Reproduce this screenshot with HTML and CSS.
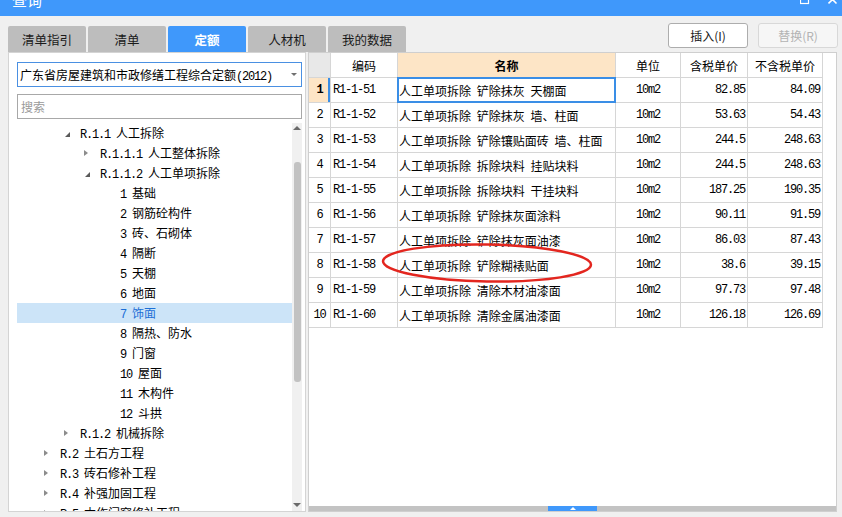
FILE: index.html
```html
<!DOCTYPE html>
<html lang="zh-CN">
<head>
<meta charset="utf-8">
<title>查询</title>
<link rel="stylesheet" href="styles.css">
</head>
<body>
<div class="titlebar">
  <div class="title">查询</div>
  <div class="winctl">
    <svg width="10" height="10" viewBox="0 0 10 10"><rect x="0.5" y="0.5" width="8" height="8" fill="none" stroke="#fff" stroke-width="1.2"/></svg>
    <svg width="10" height="10" viewBox="0 0 10 10"><path d="M0.5 0.5 L8.5 8.5 M8.5 0.5 L0.5 8.5" stroke="#fff" stroke-width="1.6" fill="none"/></svg>
  </div>
</div>

<div class="toolbar">
  <div class="tabs">
    <div class="tab">清单指引</div>
    <div class="tab">清单</div>
    <div class="tab active">定额</div>
    <div class="tab">人材机</div>
    <div class="tab">我的数据</div>
  </div>
  <div class="actions">
    <div class="btn">插入(I)</div>
    <div class="btn disabled">替换(R)</div>
  </div>
</div>

<div class="main">
  <div class="left">
    <div class="select"><span class="sel-text">广东省房屋建筑和市政修缮工程综合定额<span class="n">(2012)</span></span><span class="caret"></span></div>
    <div class="search">搜索</div>
    <div class="treewrap">
      <div class="tree">
        <div class="node l1"><span class="tw open"></span><span class="n">R.1.1 </span>人工拆除</div>
        <div class="node l2"><span class="tw closed"></span><span class="n">R.1.1.1 </span>人工整体拆除</div>
        <div class="node l2"><span class="tw open"></span><span class="n">R.1.1.2 </span>人工单项拆除</div>
        <div class="node l3"><span class="tw"></span><span class="n">1 </span>基础</div>
        <div class="node l3"><span class="tw"></span><span class="n">2 </span>钢筋砼构件</div>
        <div class="node l3"><span class="tw"></span><span class="n">3 </span>砖、石砌体</div>
        <div class="node l3"><span class="tw"></span><span class="n">4 </span>隔断</div>
        <div class="node l3"><span class="tw"></span><span class="n">5 </span>天棚</div>
        <div class="node l3"><span class="tw"></span><span class="n">6 </span>地面</div>
        <div class="node l3 sel"><span class="tw"></span><span class="n">7 </span>饰面</div>
        <div class="node l3"><span class="tw"></span><span class="n">8 </span>隔热、防水</div>
        <div class="node l3"><span class="tw"></span><span class="n">9 </span>门窗</div>
        <div class="node l3"><span class="tw"></span><span class="n">10 </span>屋面</div>
        <div class="node l3"><span class="tw"></span><span class="n">11 </span>木构件</div>
        <div class="node l3"><span class="tw"></span><span class="n">12 </span>斗拱</div>
        <div class="node l1"><span class="tw closed"></span><span class="n">R.1.2 </span>机械拆除</div>
        <div class="node l0"><span class="tw closed"></span><span class="n">R.2 </span>土石方工程</div>
        <div class="node l0"><span class="tw closed"></span><span class="n">R.3 </span>砖石修补工程</div>
        <div class="node l0"><span class="tw closed"></span><span class="n">R.4 </span>补强加固工程</div>
        <div class="node l0"><span class="tw closed"></span><span class="n">R.5 </span>木作门窗修补工程</div>
      </div>
      <div class="vscroll">
        <div class="sb-up"></div>
        <div class="sb-thumb"></div>
        <div class="sb-down"></div>
      </div>
    </div>
  </div>

  <div class="right">
    <div class="grid">
      <div class="corner"></div>
      <div class="hd">编码</div>
      <div class="hd hname">名称</div>
      <div class="hd">单位</div>
      <div class="hd">含税单价</div>
      <div class="hd">不含税单价</div>

      <div class="rn cur"><span class="n">1</span></div>
      <div class="code n">R1-1-51</div>
      <div class="name cur">人工单项拆除 铲除抹灰 天棚面</div>
      <div class="unit n">10m2</div>
      <div class="price n">82.85</div>
      <div class="price n">84.09</div>

      <div class="rn"><span class="n">2</span></div>
      <div class="code n">R1-1-52</div>
      <div class="name">人工单项拆除 铲除抹灰 墙、柱面</div>
      <div class="unit n">10m2</div>
      <div class="price n">53.63</div>
      <div class="price n">54.43</div>

      <div class="rn"><span class="n">3</span></div>
      <div class="code n">R1-1-53</div>
      <div class="name">人工单项拆除 铲除镶贴面砖 墙、柱面</div>
      <div class="unit n">10m2</div>
      <div class="price n">244.5</div>
      <div class="price n">248.63</div>

      <div class="rn"><span class="n">4</span></div>
      <div class="code n">R1-1-54</div>
      <div class="name">人工单项拆除 拆除块料 挂贴块料</div>
      <div class="unit n">10m2</div>
      <div class="price n">244.5</div>
      <div class="price n">248.63</div>

      <div class="rn"><span class="n">5</span></div>
      <div class="code n">R1-1-55</div>
      <div class="name">人工单项拆除 拆除块料 干挂块料</div>
      <div class="unit n">10m2</div>
      <div class="price n">187.25</div>
      <div class="price n">190.35</div>

      <div class="rn"><span class="n">6</span></div>
      <div class="code n">R1-1-56</div>
      <div class="name">人工单项拆除 铲除抹灰面涂料</div>
      <div class="unit n">10m2</div>
      <div class="price n">90.11</div>
      <div class="price n">91.59</div>

      <div class="rn"><span class="n">7</span></div>
      <div class="code n">R1-1-57</div>
      <div class="name">人工单项拆除 铲除抹灰面油漆</div>
      <div class="unit n">10m2</div>
      <div class="price n">86.03</div>
      <div class="price n">87.43</div>

      <div class="rn"><span class="n">8</span></div>
      <div class="code n">R1-1-58</div>
      <div class="name">人工单项拆除 铲除糊裱贴面</div>
      <div class="unit n">10m2</div>
      <div class="price n">38.6</div>
      <div class="price n">39.15</div>

      <div class="rn"><span class="n">9</span></div>
      <div class="code n">R1-1-59</div>
      <div class="name">人工单项拆除 清除木材油漆面</div>
      <div class="unit n">10m2</div>
      <div class="price n">97.73</div>
      <div class="price n">97.48</div>

      <div class="rn"><span class="n">10</span></div>
      <div class="code n">R1-1-60</div>
      <div class="name">人工单项拆除 清除金属油漆面</div>
      <div class="unit n">10m2</div>
      <div class="price n">126.18</div>
      <div class="price n">126.69</div>
    </div>

    <svg class="ellipse" width="216" height="44" viewBox="0 0 216 44">
      <ellipse cx="108" cy="22" rx="104" ry="18.5" transform="rotate(1 108 22)" fill="none" stroke="#e3261f" stroke-width="2.5"/>
    </svg>

    <div class="splitter"><div class="grip"><span class="grip-arrow"></span></div></div>
  </div>
</div>
</body>
</html>
```

FILE: styles.css
```css
* { box-sizing: border-box; }
html, body { margin: 0; padding: 0; }
body {
  width: 842px;
  height: 517px;
  overflow: hidden;
  background: #f0f0f0;
  font-family: "Noto Sans CJK SC", "Microsoft YaHei", sans-serif;
  font-size: 12px;
  color: #000;
}
.n {
  font-family: "Liberation Mono", "Noto Sans CJK SC", monospace;
  letter-spacing: -1.2px;
}

/* title bar */
.titlebar {
  height: 16px;
  background: #3f98fb;
  display: flex;
  justify-content: space-between;
  overflow: hidden;
  padding: 0 4px 0 12px;
}
.title {
  color: #fff;
  font-size: 15px;
  line-height: 15px;
  margin-top: -8px;
}
.winctl {
  display: flex;
  gap: 18px;
  align-items: flex-start;
}
.winctl svg { display: block; margin-top: -5px; }

/* toolbar */
.toolbar {
  height: 36px;
  display: flex;
  padding: 0 4px 0 8px;
}
.tabs {
  display: flex;
  gap: 2px;
  align-self: flex-end;
}
.tab {
  width: 78px;
  height: 26px;
  background: #bdbdbd;
  border-radius: 2px 2px 0 0;
  display: flex;
  align-items: center;
  justify-content: center;
  color: #1a1a1a;
  font-size: 12.5px;
}
.tab.active {
  background: #3f98fb;
  color: #fff;
  font-weight: bold;
}
.actions {
  margin-left: auto;
  display: flex;
  gap: 10px;
  padding-top: 7px;
}
.btn {
  width: 80px;
  height: 25px;
  border: 1px solid #adadad;
  border-radius: 3px;
  background: #fff;
  display: flex;
  align-items: center;
  justify-content: center;
  color: #1a1a1a;
}
.btn.disabled {
  border-color: #d8d8d8;
  background: #f6f6f6;
  color: #b3b3b3;
}

/* main */
.main {
  display: flex;
  gap: 2px;
  padding-left: 8px;
  height: 460px;
}
.left {
  width: 298px;
  border: 1px solid #d4d4d4;
  background: #fff;
  padding: 9px 3px 0 8px;
  display: flex;
  flex-direction: column;
}
.select {
  height: 25px;
  border: 1px solid #4a90e2;
  display: flex;
  align-items: center;
  padding-left: 2px;
  white-space: nowrap;
}
.select .caret {
  margin-left: auto;
  margin-right: 4px;
  width: 0;
  height: 0;
  border-left: 3px solid transparent;
  border-right: 3px solid transparent;
  border-top: 3px solid #707070;
}
.search {
  height: 25px;
  margin-top: 7px;
  border: 1px solid #a8a8a8;
  display: flex;
  align-items: center;
  padding-left: 3px;
  color: #9a9a9a;
}
.treewrap {
  margin-top: 4px;
  flex: 1;
  min-height: 0;
  display: flex;
  overflow: hidden;
}
.tree { flex: 1; overflow: hidden; }
.node {
  height: 20px;
  line-height: 20px;
  white-space: pre;
}
.l0 { padding-left: 27px; }
.l1 { padding-left: 47px; }
.l2 { padding-left: 67px; }
.l3 { padding-left: 87px; }
.node.sel { background: #cce4f8; color: #1c6fd6; }
.tw {
  display: inline-flex;
  vertical-align: top;
  width: 16px;
  height: 20px;
  align-items: center;
}
.tw.closed::before {
  content: "";
  border-left: 4px solid #8c8c8c;
  border-top: 3.5px solid transparent;
  border-bottom: 3.5px solid transparent;
}
.tw.open::before {
  content: "";
  margin: 3px 0 0 1px;
  border-style: solid;
  border-width: 0 0 5px 5px;
  border-color: transparent transparent #5a5a5a transparent;
}
.vscroll {
  width: 10px;
  background: #f0f0f0;
  display: flex;
  flex-direction: column;
  align-items: center;
}
.sb-up {
  margin-top: 3px;
  border-left: 4px solid transparent;
  border-right: 4px solid transparent;
  border-bottom: 4px solid #6a6a6a;
}
.sb-thumb {
  margin-top: 32px;
  width: 7px;
  height: 220px;
  background: #c2c2c2;
  border-radius: 3px;
}
.sb-down {
  margin-top: auto;
  margin-bottom: 4px;
  border-left: 4px solid transparent;
  border-right: 4px solid transparent;
  border-top: 4px solid #6a6a6a;
}

/* right panel */
.right {
  width: 529px;
  border: 1px solid #cfcfcf;
  background: #fff;
  display: flex;
  flex-direction: column;
  position: relative;
}
.grid {
  display: grid;
  grid-template-columns: 22px 67px 218px 65px 67px 75px;
  grid-auto-rows: 25px;
  width: 514px;
}
.grid > div {
  border-right: 1px solid #d6d6d6;
  border-bottom: 1px solid #d6d6d6;
  display: flex;
  align-items: center;
  white-space: nowrap;
  overflow: hidden;
}
.grid > .hd { justify-content: center; }
.grid > .corner { background: #e8e8e8; }
.grid > .hname { background: #fde5c6; font-weight: bold; }
.grid > .rn { justify-content: center; }
.grid > .rn.cur {
  background: #fde5c6;
  font-weight: bold;
  box-shadow: inset -2px 0 #3a8ee6;
}
.grid > .code { padding-left: 2px; }
.grid > .name { padding-left: 1px; word-spacing: 3px; }
.grid > .unit { justify-content: center; }
.grid > .price { justify-content: flex-end; padding-right: 2px; }
.grid > .name.cur { position: relative; overflow: visible; }
.grid > .name.cur::after {
  content: "";
  position: absolute;
  top: -1px;
  left: -1px;
  right: -1px;
  bottom: -1px;
  border: 2px solid #3a8ee6;
}
.ellipse {
  position: absolute;
  left: 70px;
  top: 188px;
}
.splitter {
  margin-top: auto;
  height: 5px;
  background: #c3c3c3;
  display: flex;
  justify-content: center;
}
.grip {
  width: 49px;
  background: #3f98fb;
  display: flex;
  align-items: center;
  justify-content: center;
}
.grip-arrow {
  width: 0;
  height: 0;
  border-left: 3px solid transparent;
  border-right: 3px solid transparent;
  border-bottom: 3px solid #fff;
}
```
